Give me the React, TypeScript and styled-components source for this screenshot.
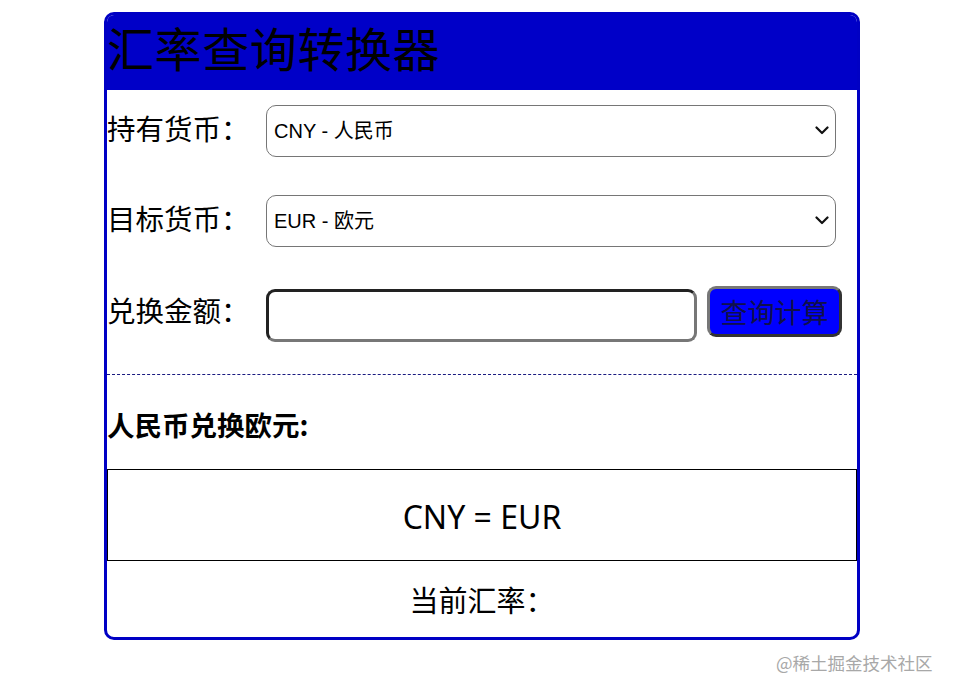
import React from "react";
import styled, { createGlobalStyle } from "styled-components";

const GlobalStyle = createGlobalStyle`
  html, body { margin: 0; padding: 0; background: #ffffff; }
  body { font-family: "Noto Sans CJK SC", "Noto Sans", sans-serif; color: #000; }
`;

const Page = styled.div`
  position: relative;
  width: 956px;
  height: 694px;
  padding-top: 12px;
  box-sizing: border-box;
`;

const Card = styled.div`
  width: 756px;
  height: 628px;
  margin-left: 104px;
  box-sizing: border-box;
  border: 3px solid #0000c4;
  border-radius: 10px;
  overflow: hidden;
  display: flex;
  flex-direction: column;
`;

const Header = styled.h1`
  margin: -3px 0 0;
  height: 78px;
  background: #0000c8;
  font-size: 47px;
  font-weight: 400;
  line-height: 64px;
  padding-top: 3px;
  box-sizing: border-box;
  color: #000;
  letter-spacing: 0.6px;
`;

const Form = styled.div`
  display: flex;
  flex-direction: column;
  padding-top: 15px;
  padding-bottom: 32px;
  border-bottom: 1px dashed #1a1a80;
`;

const Row = styled.div<{ $gap?: number; $align?: string; $height: number }>`
  display: flex;
  align-items: ${(p) => p.$align || "center"};
  height: ${(p) => p.$height}px;
  margin-top: ${(p) => p.$gap || 0}px;
`;

const Label = styled.label<{ $offset?: number }>`
  width: 159px;
  flex: none;
  font-size: 28.5px;
  line-height: 40px;
  margin-top: ${(p) => p.$offset || 0}px;
  position: relative;
  top: -3px;
`;

const SelectWrap = styled.div`
  position: relative;
  width: 570px;
  height: 52px;
`;

const Select = styled.select`
  appearance: none;
  -webkit-appearance: none;
  width: 100%;
  height: 100%;
  box-sizing: border-box;
  border: 1px solid #767676;
  border-radius: 10px;
  background: #fff;
  padding: 0 30px 0 7px;
  font-family: "Liberation Sans", "Noto Sans CJK SC", sans-serif;
  font-size: 20px;
  color: #000;
`;

const Chevron = styled.svg`
  position: absolute;
  right: 7px;
  top: 21px;
  width: 14px;
  height: 9px;
  pointer-events: none;
`;

const AmountInput = styled.input`
  width: 431px;
  height: 53px;
  box-sizing: border-box;
  margin-top: 3px;
  border: 3px solid;
  border-color: #222 #777 #777 #222;
  border-radius: 9px;
  background: #fff;
  font-size: 20px;
  padding: 0 8px;
`;

const QueryButton = styled.button`
  width: 135px;
  height: 51px;
  box-sizing: border-box;
  margin-left: 10px;
  border: 3px solid;
  border-color: #777 #333 #333 #777;
  border-radius: 9px;
  background: #0000ff;
  color: #10104a;
  font-family: "Noto Sans CJK SC", sans-serif;
  font-size: 27px;
  line-height: 40px;
  padding: 0;
`;

const ResultTitle = styled.h3`
  margin: 32px 0 0;
  font-size: 27.5px;
  font-weight: 700;
  line-height: 40px;
  position: relative;
  top: -3px;
`;

const ResultBox = styled.div`
  margin-top: 22px;
  height: 92px;
  box-sizing: border-box;
  border: 1px solid #000;
  display: flex;
  align-items: center;
  justify-content: center;
  font-family: "Noto Sans", "Noto Sans CJK SC", sans-serif;
  font-size: 32px;
  line-height: 40px;
  padding-top: 3px;
`;

const RateLine = styled.div`
  flex: 1;
  display: flex;
  align-items: center;
  justify-content: center;
  font-size: 29px;
  line-height: 40px;
`;

const Watermark = styled.div`
  position: absolute;
  left: 776px;
  top: 651px;
  font-size: 17.5px;
  line-height: 24px;
  color: #a8a8a8;
`;

function CurrencySelect({ value }: { value: string }) {
  return (
    <SelectWrap>
      <Select defaultValue={value}>
        <option value="CNY">CNY - 人民币</option>
        <option value="EUR">EUR - 欧元</option>
        <option value="USD">USD - 美元</option>
      </Select>
      <Chevron viewBox="0 0 14 9">
        <polyline points="1.5,1.5 7,7 12.5,1.5" fill="none" stroke="#111" strokeWidth="2.2" strokeLinecap="round" strokeLinejoin="round" />
      </Chevron>
    </SelectWrap>
  );
}

export default function App() {
  return (
    <Page>
      <GlobalStyle />
      <Card>
        <Header>汇率查询转换器</Header>
        <Form>
          <Row $height={52}>
            <Label>持有货币：</Label>
            <CurrencySelect value="CNY" />
          </Row>
          <Row $height={52} $gap={38}>
            <Label>目标货币：</Label>
            <CurrencySelect value="EUR" />
          </Row>
          <Row $height={56} $gap={39} $align="flex-start">
            <Label $offset={7}>兑换金额：</Label>
            <AmountInput type="text" />
            <QueryButton>查询计算</QueryButton>
          </Row>
        </Form>
        <ResultTitle>人民币兑换欧元:</ResultTitle>
        <ResultBox>CNY = EUR</ResultBox>
        <RateLine>当前汇率：</RateLine>
      </Card>
      <Watermark>@稀土掘金技术社区</Watermark>
    </Page>
  );
}
